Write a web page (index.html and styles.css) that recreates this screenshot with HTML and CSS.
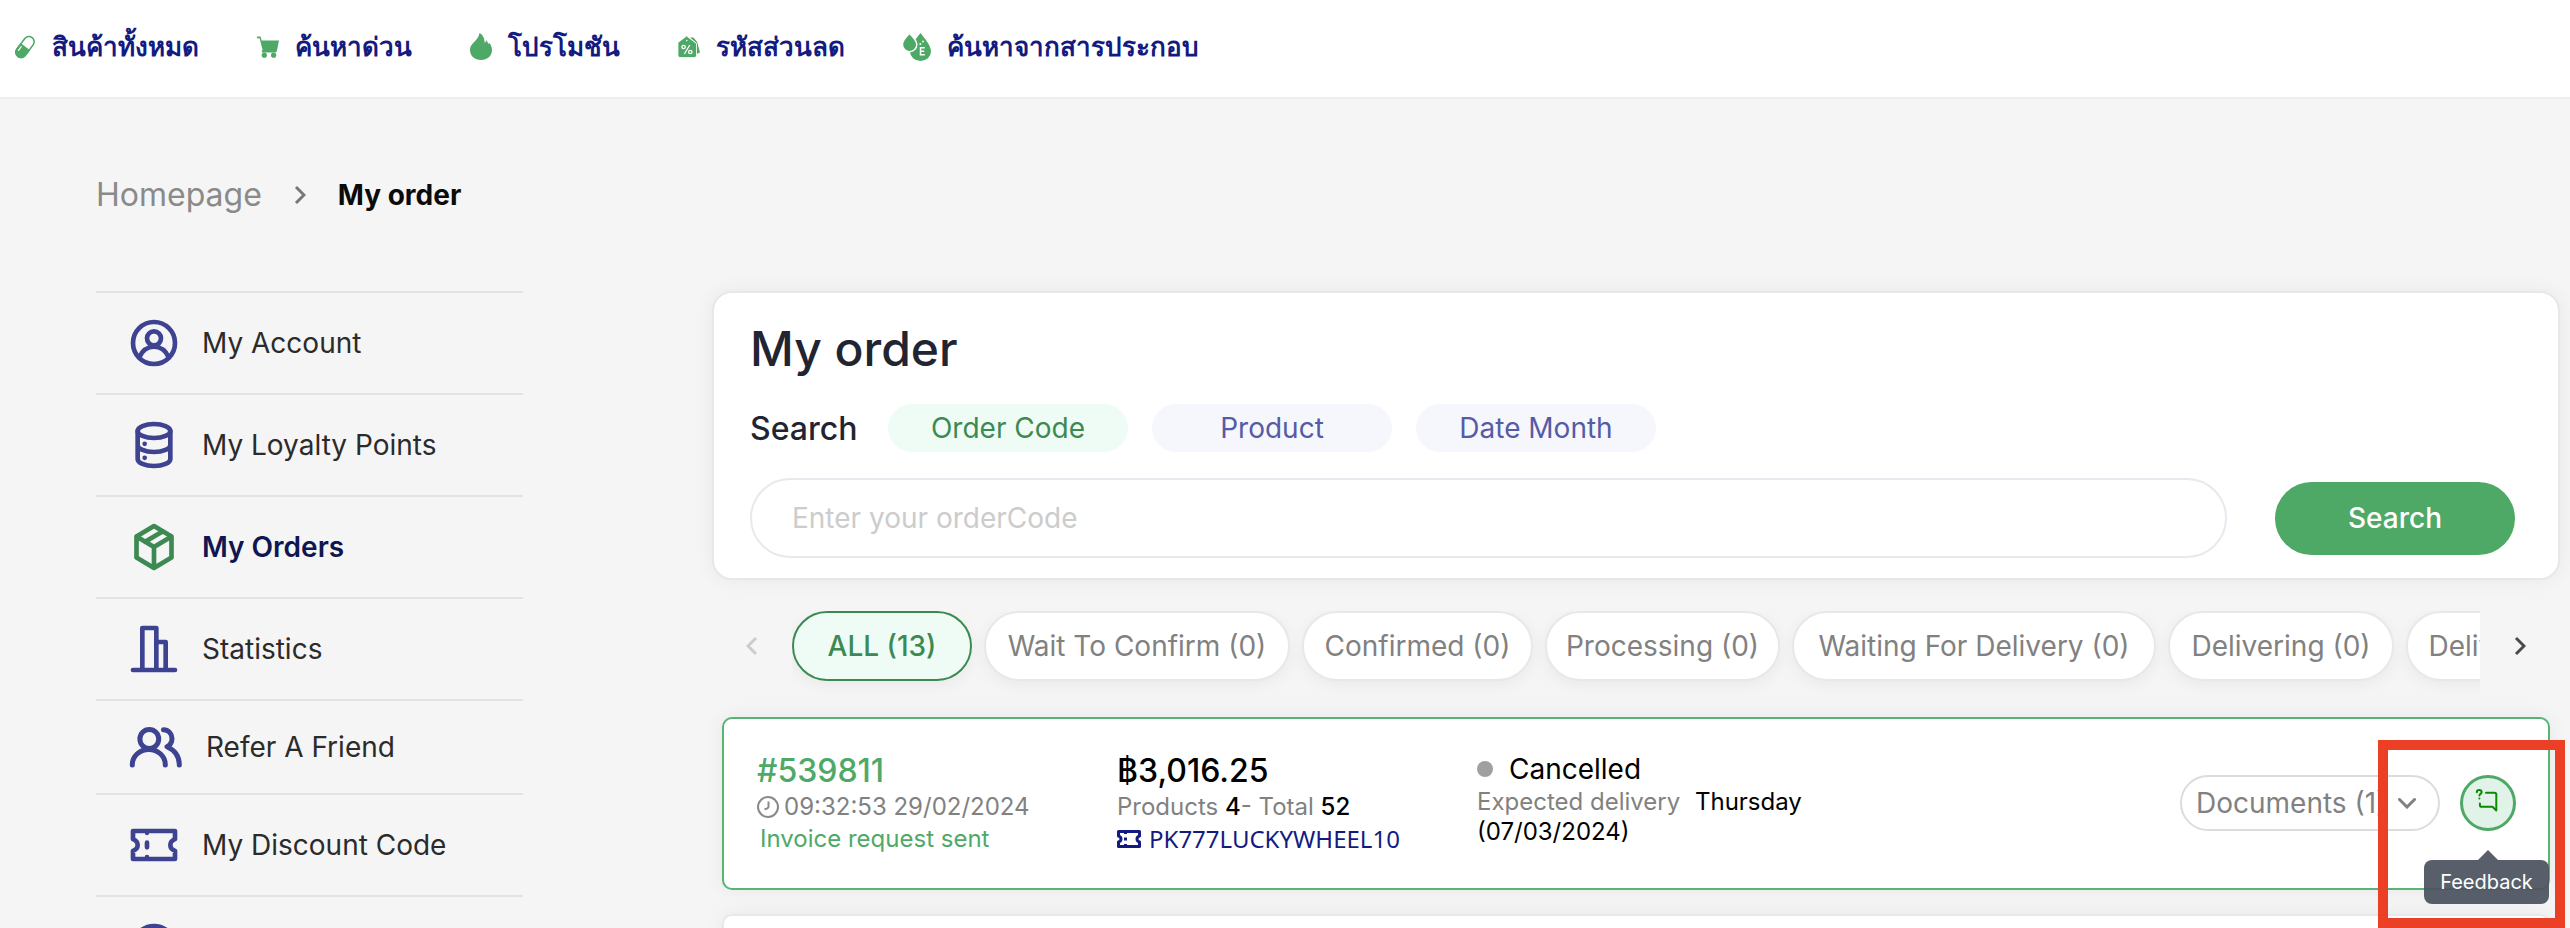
FILE: index.html
```html
<!DOCTYPE html>
<html lang="en">
<head>
<meta charset="utf-8">
<meta name="viewport" content="width=device-width, initial-scale=1">
<title>My order</title>
<link rel="stylesheet" href="styles.css">
</head>
<body>
<div class="page">
  <header class="topbar">
    <nav class="topnav" lang="th">
      <a class="topnav-link" href="#">
        <svg class="topnav-icon" viewBox="0 0 22 22"><g transform="rotate(37 11 11)"><rect x="5.8" y="-.8" width="10.4" height="23.6" rx="5.2" fill="none" stroke="currentColor" stroke-width="1.6"/><path d="M5 10.5h12v7a6 6 0 0 1-12 0z" fill="currentColor"/><path d="M7.8 13v4.5" stroke="#fff" stroke-width="1.2" stroke-linecap="round"/></g></svg>
        สินค้าทั้งหมด</a>
      <a class="topnav-link" href="#">
        <svg class="topnav-icon" viewBox="0 0 22 22" fill="currentColor"><path d="M0 .6h3.6l1 3.8H22l-2.2 10.8-1.2 1.2H5.2l-.6-1.6 1-.8L2.6 2.2H0z"/><circle cx="7.3" cy="19.2" r="2.6"/><circle cx="16.6" cy="19.2" r="2.6"/></svg>
        ค้นหาด่วน</a>
      <a class="topnav-link" href="#">
        <svg class="topnav-icon" viewBox="0 0 22 27" fill="currentColor"><path d="M9.500 0c3.500 1.500 5 5.500 5.300 10 .8-.6 1.200-1.600 1.300-2.800 1 .8 1.700 2 2.200 3.600.5-.1.800-.4 1.100-.9C21.300 12 22 14.500 22 17 22 22.800 17.500 27 11 27S0 22.800 0 17C0 10 8 8.500 9.500 0z"/></svg>
        โปรโมชัน</a>
      <a class="topnav-link" href="#">
        <svg class="topnav-icon" viewBox="0 0 22 22"><path d="M12 1.500h3.500l3.700 4.500 2.800 10.500-3.500 1.500V7z" fill="currentColor"/><path d="M8.600 0l-8.600 6.500v13a2 2 0 0 0 2 2h14.500a2 2 0 0 0 2-2v-12z" fill="currentColor" stroke="#fff" stroke-width=".8"/><g fill="none" stroke="#fff" stroke-width="1.300"><circle cx="5.600" cy="11" r="1.700"/><circle cx="12.300" cy="16" r="1.700"/><path d="M11.800 9l-5.400 9"/></g><circle cx="8.800" cy="4.600" r=".8" fill="#fff"/></svg>
        รหัสส่วนลด</a>
      <a class="topnav-link" href="#">
        <svg class="topnav-icon topnav-icon-wide" viewBox="0 0 28 28"><path d="M17.500 0c4 5.500 10.500 12 10.500 18.500a10.500 9.500 0 0 1-21 0C7 12 13.500 5.500 17.500 0z" fill="currentColor"/><path d="M6.500 0C9 3.800 13.800 7 13.800 11.500a7 7 0 0 1-14.300 0C-.5 7 4 3.800 6.500 0z" fill="currentColor" stroke="#fff" stroke-width="1.400"/><path d="M21.800 14.700h-4.300v7h4.300M17.500 18.200h3.800" fill="none" stroke="#fff" stroke-width="1.500"/><circle cx="17.300" cy="11" r="1" fill="#fff"/><circle cx="20" cy="8.500" r=".9" fill="#fff"/></svg>
        ค้นหาจากสารประกอบ</a>
    </nav>
  </header>

  <nav class="breadcrumb" aria-label="Breadcrumb">
    <a class="breadcrumb-link" href="#">Homepage</a>
    <svg class="chevron breadcrumb-chevron" viewBox="0 0 12 20"><path d="M2 2l8 8-8 8"/></svg>
    <span class="breadcrumb-current" aria-current="page">My order</span>
  </nav>

  <div class="columns">
    <nav class="sidebar" aria-label="Account">
      <a class="side-link" href="#"><svg class="side-icon" viewBox="0 0 24 24"><circle cx="12" cy="12" r="9"/><circle cx="12" cy="10" r="3"/><path d="M5.600 18.200C7 15.200 9.200 13.600 12 13.600s5 1.600 6.400 4.600"/></svg>My Account</a>
      <a class="side-link" href="#"><svg class="side-icon" viewBox="0 0 24 24"><ellipse cx="12" cy="6" rx="7" ry="3"/><path d="M5 6v12c0 1.660 3.130 3 7 3s7-1.340 7-3V6M5 12c0 1.660 3.130 3 7 3s7-1.340 7-3"/><path d="M8 11.500h.01M8 17.500h.01"/></svg>My Loyalty Points</a>
      <a class="side-link side-link-active" href="#" aria-current="page"><svg class="side-icon" viewBox="0 0 24 24"><path d="M12 3l7.500 4.500v9L12 21l-7.500-4.500v-9zM12 12l7.500-4.500M12 12v9M12 12L4.500 7.500M8.200 9.800l7.600-4.600"/></svg>My Orders</a>
      <a class="side-link" href="#"><svg class="side-icon" viewBox="0 0 24 24"><path d="M3 21h18M7 21V3h6v18M13 9h4v12"/></svg>Statistics</a>
      <a class="side-link" href="#"><svg class="side-icon side-icon-wide" viewBox="0 0 60 48"><circle cx="23.300" cy="16" r="9.400"/><path d="M6.300 42c0-8.500 7-15.500 16.500-15.500S39.300 33.500 39.300 42M37.500 6.800c5 0 8.500 4 8.500 8.700 0 3.500-1.800 6.500-5 8.200C48.500 27 53.300 33 53.300 42"/></svg>Refer A Friend</a>
      <a class="side-link" href="#"><svg class="side-icon" viewBox="0 0 24 24"><path d="M3 6h18v3.500c-1.300.5-2 1.400-2 2.500s.7 2 2 2.500V18H3v-3.500c1.300-.5 2-1.400 2-2.500s-.7-2-2-2.500zM9 6v.8M9 11v2M9 17.200v.8"/></svg>My Discount Code</a>
      <a class="side-link" href="#" aria-label="Help"><svg class="side-icon" viewBox="0 0 24 24"><circle cx="12" cy="12" r="9"/><path d="M12 11v5M12 8h.01"/></svg></a>
    </nav>

    <main class="content">
      <form class="search-card">
        <h1 class="title">My order</h1>
        <div class="search-by">
          <label class="search-label" for="q">Search</label>
          <button class="chip chip-active" type="button">Order Code</button>
          <button class="chip" type="button">Product</button>
          <button class="chip" type="button">Date Month</button>
        </div>
        <div class="search-row">
          <input class="search-input" id="q" type="text" placeholder="Enter your orderCode">
          <button class="search-button" type="submit">Search</button>
        </div>
      </form>

      <div class="tabs">
        <button class="tabs-arrow tabs-arrow-off" type="button" aria-label="Previous"><svg class="chevron" viewBox="0 0 12 20"><path d="M10 2l-8 8 8 8"/></svg></button>
        <div class="tab-list">
          <button class="tab tab-active" type="button">ALL (13)</button>
          <button class="tab" type="button">Wait To Confirm (0)</button>
          <button class="tab" type="button">Confirmed (0)</button>
          <button class="tab" type="button">Processing (0)</button>
          <button class="tab" type="button">Waiting For Delivery (0)</button>
          <button class="tab" type="button">Delivering (0)</button>
          <button class="tab" type="button">Delivered (0)</button>
        </div>
        <button class="tabs-arrow" type="button" aria-label="Next"><svg class="chevron" viewBox="0 0 12 20"><path d="M2 2l8 8-8 8"/></svg></button>
      </div>

      <article class="order order-active">
        <div class="order-col">
          <a class="order-number" href="#">#539811</a>
          <p class="order-line order-time"><svg class="clock" viewBox="0 0 22 22"><circle cx="11" cy="11" r="10"/><path d="M11.500 5.500v5.500c-.5 1.500-2 2-4 2.300"/></svg>09:32:53 29/02/2024</p>
          <p class="order-line order-invoice">Invoice request sent</p>
        </div>
        <div class="order-col">
          <p class="order-total">฿3,016.25</p>
          <p class="order-line">Products <b class="strong">4</b>- Total <b class="strong">52</b></p>
          <a class="order-line order-code" href="#"><svg class="ticket" viewBox="0 0 24 18"><path d="M1.500 1.500h21v4.500c-1.600.5-2.500 1.500-2.500 3s.9 2.500 2.500 3v4.500h-21V12c1.600-.5 2.500-1.500 2.500-3s-.9-2.500-2.500-3zM8.500 2v2M8.500 7.500v3M8.500 14v2"/></svg>PK777LUCKYWHEEL10</a>
        </div>
        <div class="order-col">
          <p class="order-status"><span class="dot"></span>Cancelled</p>
          <p class="order-delivery">Expected delivery <span class="delivery-day">Thursday</span> <span class="delivery-date">(07/03/2024)</span></p>
        </div>
        <div class="order-actions">
          <button class="documents" type="button" aria-haspopup="menu">Documents (1)<svg class="chevron-down" viewBox="0 0 18 11"><path d="M1.500 1.500L9 9l7.500-7.500"/></svg></button>
          <div class="feedback">
            <button class="feedback-button" type="button" aria-describedby="feedback-tip" aria-label="Feedback"><svg class="feedback-icon" viewBox="0 0 24 24"><path d="M11 3.800h8.500q1.800 0 1.800 1.800v15.800l-3.800-3.600H6.800q-1.900 0-1.900-1.900v-1.500"/><path d="M1.800 3.300c0-3 4.800-3 4.800 0 0 1.600-2.200 1.500-2.200 3.200M4.400 9.500v.1"/></svg></button>
            <div class="tooltip" id="feedback-tip" role="tooltip">Feedback</div>
          </div>
        </div>
        <div class="highlight"></div>
      </article>

      <article class="order" aria-label="Next order"></article>
    </main>
  </div>
</div>
</body>
</html>
```
FILE: styles.css
```css
:root {
  --green: #4fa966;
  --green-dark: #3c8a52;
  --navy: #131b80;
  --indigo: #3d4390;
  --gray: #818181;
  --line: #e8e8e8;
  --mint: #effcf6;
}

*,
*::before {
  box-sizing: border-box;
}

body {
  margin: 0;
  background: #f5f5f5;
  color: #2b2b2b;
  font-family: Inter, "Noto Sans", "Liberation Sans", sans-serif;
  font-size: 28px;
}

h1,
p {
  margin: 0;
}

a {
  color: inherit;
  text-decoration: none;
}

button,
input {
  margin: 0;
  font: inherit;
  color: inherit;
}

button {
  padding: 0;
  border: 0;
  background: none;
  white-space: nowrap;
}

svg {
  display: block;
  flex: none;
}

.page {
  height: 100vh;
  overflow: hidden;
}

/* Top navigation */
.topbar {
  padding: 0 14px;
  background: #fff;
  border-bottom: 2px solid #efefef;
}

.topnav {
  display: flex;
  gap: 58px;
  height: 97px;
  padding-bottom: 4px;
  color: var(--navy);
  font-size: 26px;
  font-weight: 600;
}

.topnav-link {
  display: flex;
  align-items: center;
  gap: 16px;
  white-space: nowrap;
}

.topnav-icon {
  width: 22px;
  color: var(--green);
  overflow: visible;
}

.topnav-icon-wide {
  width: 28px;
}

/* Breadcrumb */
.breadcrumb {
  display: flex;
  align-items: center;
  gap: 32px;
  padding: 72px 96px;
  line-height: 48px;
}

.breadcrumb-link {
  color: #8a8a8a;
  font-size: 32px;
}

.breadcrumb-current {
  color: #0b0b0b;
  font-weight: 700;
}

.chevron {
  width: 12px;
  height: 20px;
  fill: none;
  stroke: currentColor;
  stroke-width: 3;
}

.breadcrumb-chevron {
  color: #777;
}

.columns {
  display: grid;
  grid-template-columns: 427px minmax(0, 1fr);
  gap: 189px;
  align-items: start;
  padding: 0 10px 0 96px;
}

/* Sidebar */
.sidebar {
  border-top: 2px solid #e3e3e3;
}

.side-link {
  display: flex;
  align-items: center;
  gap: 20px;
  padding: 22px 30px;
  border-bottom: 2px solid #e3e3e3;
}

.side-link-active {
  color: #10164f;
  font-weight: 600;
}

.side-icon {
  width: 56px;
  height: 56px;
  fill: none;
  stroke: var(--indigo);
  stroke-width: 2;
  stroke-linecap: round;
  stroke-linejoin: round;
}

.side-link-active .side-icon {
  stroke: var(--green-dark);
}

.side-icon-wide {
  width: 60px;
  height: 48px;
  stroke-width: 5;
}

/* Search card */
.search-card {
  padding: 23px 43px 20px 36px;
  background: #fff;
  border: 2px solid var(--line);
  border-radius: 20px;
  box-shadow: 0 0 20px rgba(0, 0, 0, .06);
}

.title {
  color: #222431;
  font-size: 48px;
  font-weight: 500;
  line-height: 66px;
}

.search-by {
  display: flex;
  align-items: center;
  gap: 24px;
  margin: 22px 0 26px;
}

.search-label {
  width: 114px;
  color: #222431;
  font-size: 32px;
  font-weight: 500;
}

.chip {
  width: 240px;
  height: 48px;
  border-radius: 24px;
  background: #f6f7fc;
  color: #555ba5;
}

.chip-active {
  background: var(--mint);
  color: var(--green-dark);
}

.search-row {
  display: flex;
  align-items: center;
  gap: 48px;
}

.search-input {
  flex: 1;
  min-width: 0;
  height: 80px;
  padding: 0 40px;
  border: 2px solid #e8e8ef;
  border-radius: 40px;
  background: #fff;
}

.search-input::placeholder {
  color: #ccc;
  opacity: 1;
}

.search-button {
  width: 240px;
  height: 73px;
  border-radius: 37px;
  background: var(--green);
  color: #fff;
  font-weight: 500;
}

/* Status tabs */
.tabs {
  display: grid;
  grid-template-columns: 80px minmax(0, 1fr) 80px;
  align-items: start;
  margin-top: 31px;
}

.tabs-arrow {
  display: grid;
  place-items: center;
  height: 70px;
  color: #4a4a4a;
}

.tabs-arrow-off {
  color: #ccc;
}

.tab-list {
  display: grid;
  grid-template-columns: 180px 306px 231px 235px 364px 226px 216px;
  gap: 12px;
  padding-bottom: 36px;
  overflow: hidden;
}

.tab {
  height: 70px;
  border: 2px solid var(--line);
  border-radius: 35px;
  background: #fff;
  color: var(--gray);
  box-shadow: 0 4px 16px rgba(0, 0, 0, .05);
}

.tab-active {
  border-color: var(--green-dark);
  background: var(--mint);
  color: var(--green-dark);
  font-weight: 500;
}

/* Orders */
.order {
  position: relative;
  display: grid;
  grid-template-columns: 360px 360px 350px minmax(0, 1fr);
  min-height: 173px;
  margin: 0 10px 24px;
  padding: 32px 32px 33px 33px;
  border: 2px solid var(--line);
  border-radius: 10px;
  background: #fff;
  box-shadow: 0 0 20px rgba(0, 0, 0, .06);
}

.order-active {
  border-color: #56b571;
}

.order-col {
  color: var(--gray);
  font-size: 24px;
  line-height: 32px;
}

.order-number,
.order-total {
  display: block;
  font-size: 32px;
  font-weight: 500;
  line-height: 40px;
}

.order-number,
.order-invoice {
  color: var(--green);
}

.order-total,
.strong {
  color: #000;
}

.strong {
  font-weight: 500;
}

.order-time,
.order-code {
  display: flex;
  align-items: center;
  gap: 5px;
}

.order-invoice {
  padding-left: 3px;
}

.order-code {
  gap: 8px;
  color: var(--navy);
  font-family: "Noto Sans", Inter, sans-serif;
}

.clock {
  width: 22px;
  fill: none;
  stroke: #8a8a8a;
  stroke-width: 2;
}

.ticket {
  width: 24px;
  fill: none;
  stroke: currentColor;
  stroke-width: 3;
  stroke-linejoin: round;
}

.order-status {
  display: flex;
  align-items: center;
  gap: 16px;
  color: #000;
  font-size: 28px;
  line-height: 36px;
}

.dot {
  width: 16px;
  height: 16px;
  border-radius: 50%;
  background: #a19fa0;
}

.order-delivery {
  line-height: 30px;
}

.delivery-day,
.delivery-date {
  color: #000;
}

.delivery-day {
  margin-left: 8px;
}

.order-actions {
  display: flex;
  align-items: center;
  justify-content: flex-end;
  gap: 20px;
}

.documents {
  display: flex;
  align-items: center;
  justify-content: space-between;
  width: 260px;
  height: 56px;
  padding: 0 22px 0 14px;
  border: 2px solid #dcdcdc;
  border-radius: 28px;
  background: #fff;
  color: var(--gray);
}

.chevron-down {
  width: 18px;
  fill: none;
  stroke: currentColor;
  stroke-width: 3;
  stroke-linecap: round;
}

.feedback {
  position: relative;
}

.feedback-button {
  display: grid;
  place-items: center;
  width: 56px;
  height: 56px;
  border: 3px solid var(--green);
  border-radius: 50%;
  background: #e1f2e9;
}

.feedback-icon {
  width: 24px;
  margin: 0 2px 4px 0;
  fill: none;
  stroke: #0c8a00;
  stroke-width: 2;
  stroke-linecap: round;
  stroke-linejoin: round;
  overflow: visible;
}

.tooltip {
  position: absolute;
  top: 85px;
  right: -33px;
  width: 125px;
  border-radius: 8px;
  background: rgba(75, 83, 95, .93);
  color: #fff;
  font-size: 20px;
  line-height: 44px;
  text-align: center;
}

.tooltip::before {
  content: "";
  position: absolute;
  bottom: 100%;
  left: 54px;
  border: 10px solid transparent;
  border-top: 0;
  border-bottom-color: rgba(75, 83, 95, .93);
}

/* Callout frame around the feedback action */
.highlight {
  position: absolute;
  top: 21px;
  right: -17px;
  width: 187px;
  height: 188px;
  border: 10px solid #eb4025;
  pointer-events: none;
  z-index: 1;
}
```
